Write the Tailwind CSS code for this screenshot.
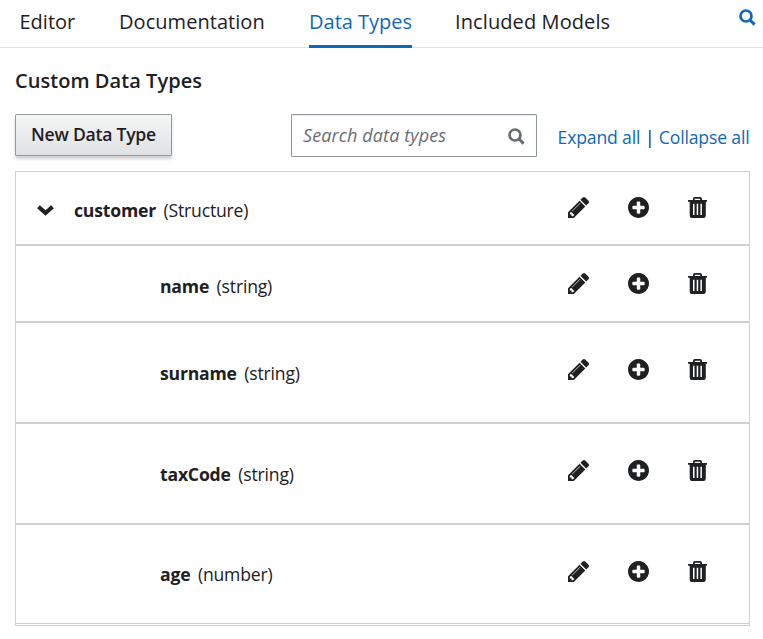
<!DOCTYPE html>
<html lang="en">
<head>
<meta charset="utf-8">
<title>Data Types</title>
<script src="https://cdn.jsdelivr.net/npm/@tailwindcss/browser@4"></script>
</head>
<body class="bg-white text-[#1f2022] font-['Open_Sans','Noto_Sans',sans-serif]">
<svg class="hidden">
  <symbol id="pencil" viewBox="0 149 1515 1515"><path d="M363 1536l91-91-235-235-91 91v107h128v128h107zM886 608q0-22-22-22-10 0-17 7l-542 542q-7 7-7 17 0 22 22 22 10 0 17-7l542-542q7-7 7-17zM832 416l416 416-832 832h-416v-416zM1515 512q0 53-37 90l-166 166-416-416 166-165q36-38 90-38 53 0 91 38l235 234q37 39 37 91z"/></symbol>
  <symbol id="plus" viewBox="0 128 1536 1536"><path d="M1216 960v-128q0-26-19-45t-45-19h-256v-256q0-26-19-45t-45-19h-128q-26 0-45 19t-19 45v256h-256q-26 0-45 19t-19 45v128q0 26 19 45t45 19h256v256q0 26 19 45t45 19h128q26 0 45-19t19-45v-256h256q26 0 45-19t19-45zM1536 896q0 209-103 385.5t-279.5 279.5-385.5 103-385.5-103-279.5-279.5-103-385.5 103-385.5 279.5-279.5 385.5-103 385.5 103 279.5 279.5 103 385.5z"/></symbol>
  <symbol id="trash" viewBox="0 0 19 21"><path fill-rule="evenodd" d="M5 3V1.800Q5 0 6.800 0h5.400Q14 0 14 1.800V3h5v1.800h-1.200v13.600q0 2.600-2.200 2.600H3.900q-2.200 0-2.200-2.600V4.800H0V3zM6.800 3h5.400V1.700H6.800zM5 6.800V18h1.500V6.800zM8.700 6.800V18h1.500V6.800zM12.400 6.800V18h1.500V6.800z"/></symbol>
  <symbol id="search" viewBox="0 0 17 17"><circle cx="7" cy="7" r="5.5" fill="none" stroke="currentColor" stroke-width="2.700"/><path d="M11 11l4.600 4.600" stroke="currentColor" stroke-width="3" fill="none"/></symbol>
</svg>

<nav class="flex h-12 border-b border-[#e0e0e0] pl-[19.500px] text-[20px] leading-[44px] whitespace-nowrap">
  <a class="w-[99.500px]"><span>Editor</span></a>
  <a class="w-[190px] tracking-[0.050px]"><span>Documentation</span></a>
  <a class="h-12 w-[103px] border-b-3 border-[#0f68b8] text-[#0f68b8]"><span>Data Types</span></a>
  <a class="ml-[43px] tracking-[0.100px]"><span>Included Models</span></a>
  <svg class="mt-[9px] mr-[7px] ml-auto size-[17px] text-[#0f68b8]"><use href="#search"/></svg>
</nav>

<main class="pt-[19px] pr-[13px] pl-[15px]">
  <h1 class="text-[20px] leading-7 font-semibold tracking-[0.050px]"><span>Custom Data Types</span></h1>
  <div class="mt-[19px] flex h-[57px] items-start whitespace-nowrap">
    <button class="h-[42px] w-[157px] rounded-[1px] border border-[#96999c] bg-linear-to-b from-[#f5f6f6] to-[#e0e1e2] pb-px text-[17.600px] leading-[37px] font-semibold tracking-[-0.250px] shadow-[0_3px_3px_rgba(0,0,0,0.18)]"><span>New Data Type</span></button>
    <div class="ml-[119px] flex h-[43px] w-[246px] rounded-[1px] border border-[#8f959b] pl-[11px] text-[18px] leading-[41px] tracking-[0.110px] text-[#6a6d70] italic shadow-[inset_0_1px_1px_rgba(0,0,0,0.08)]">
      <span>Search data types</span>
      <svg class="mt-[13px] mr-[11px] ml-auto size-[17px]"><use href="#search"/></svg>
    </div>
    <div class="mt-[10px] ml-[20.500px] flex text-[17.600px] leading-[26px] tracking-[-0.150px]">
      <a class="w-[87.500px] text-[#0f68b8]"><span>Expand all</span></a><span class="w-[13.800px]">|</span><a class="text-[#0f68b8]"><span>Collapse all</span></a>
    </div>
  </div>

  <section class="w-[735px] border border-[#d0d0d0] text-[17.600px] leading-6 tracking-[-0.190px] whitespace-nowrap">
    <div class="flex h-[74px] border-b-2 border-[#d0d0d0] pt-[25px]">
      <svg class="mt-2 ml-[21px] h-[11px] w-[17px]" viewBox="0 0 17 11"><path d="M1.500 1.700l7 6.300 7-6.300" fill="none" stroke="currentColor" stroke-width="4"/></svg>
      <div class="mt-px ml-5 flex w-[494px] gap-[7.500px]"><b><span>customer</span></b><span>(Structure)</span></div>
      <svg class="size-[21px] fill-current"><use href="#pencil"/></svg>
      <svg class="ml-[39px] size-[21px] fill-current"><use href="#plus"/></svg>
      <svg class="ml-[39px] h-[21px] w-[19px] fill-current"><use href="#trash"/></svg>
    </div>
    <div class="flex h-[77px] border-b-2 border-[#d0d0d0] pt-[27px]">
      <div class="mt-px ml-[144px] flex w-[408px] gap-[7.500px]"><b><span>name</span></b><span>(string)</span></div>
      <svg class="size-[21px] fill-current"><use href="#pencil"/></svg>
      <svg class="ml-[39px] size-[21px] fill-current"><use href="#plus"/></svg>
      <svg class="ml-[39px] h-[21px] w-[19px] fill-current"><use href="#trash"/></svg>
    </div>
    <div class="flex h-[101px] border-b-2 border-[#d0d0d0] pt-9">
      <div class="mt-[2px] ml-[144px] flex w-[408px] gap-[7.500px]"><b><span>surname</span></b><span>(string)</span></div>
      <svg class="size-[21px] fill-current"><use href="#pencil"/></svg>
      <svg class="ml-[39px] size-[21px] fill-current"><use href="#plus"/></svg>
      <svg class="ml-[39px] h-[21px] w-[19px] fill-current"><use href="#trash"/></svg>
    </div>
    <div class="flex h-[101px] border-b-2 border-[#d0d0d0] pt-9">
      <div class="mt-[2px] ml-[144px] flex w-[408px] gap-[7.500px]"><b><span>taxCode</span></b><span>(string)</span></div>
      <svg class="size-[21px] fill-current"><use href="#pencil"/></svg>
      <svg class="ml-[39px] size-[21px] fill-current"><use href="#plus"/></svg>
      <svg class="ml-[39px] h-[21px] w-[19px] fill-current"><use href="#trash"/></svg>
    </div>
    <div class="mb-px flex h-[99px] border-b border-[#d0d0d0] pt-9">
      <div class="mt-px ml-[144px] flex w-[408px] gap-[7.500px]"><b><span>age</span></b><span>(number)</span></div>
      <svg class="size-[21px] fill-current"><use href="#pencil"/></svg>
      <svg class="ml-[39px] size-[21px] fill-current"><use href="#plus"/></svg>
      <svg class="ml-[39px] h-[21px] w-[19px] fill-current"><use href="#trash"/></svg>
    </div>
  </section>
</main>
</body>
</html>
